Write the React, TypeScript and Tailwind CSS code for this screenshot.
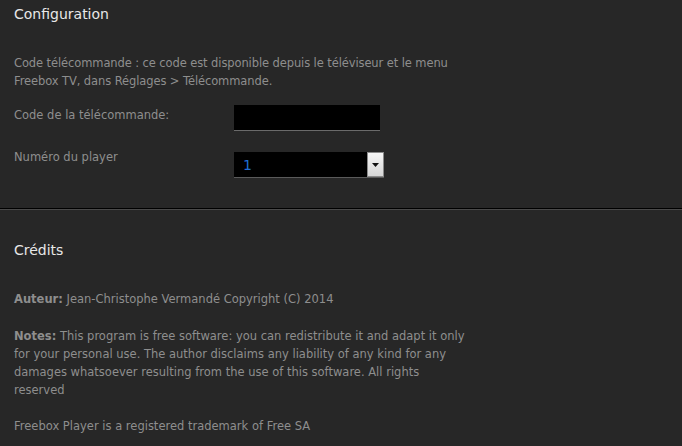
import React from "react";

function Heading({ children }: { children: React.ReactNode }) {
  return <h2 className="text-[14px] leading-5 text-[#e8e8e8] font-normal">{children}</h2>;
}

export default function App() {
  return (
    <div className="min-h-[446px] w-full bg-[#272727] text-[11.5px] leading-[18px] text-[#8e8e8e] font-['DejaVu_Sans',Verdana,sans-serif]">
      <section className="px-[14px] pt-[4px] pb-[30px]">
        <Heading>Configuration</Heading>
        <p className="mt-[30px] whitespace-nowrap tracking-[-0.1px]">
          Code télécommande : ce code est disponible depuis le téléviseur et le menu
          <br />
          Freebox TV, dans Réglages &gt; Télécommande.
        </p>
        <div className="mt-[15px] flex items-start">
          <label className="w-[220px] mt-[1px]">Code de la télécommande:</label>
          <input
            type="text"
            className="h-[26px] w-[146px] bg-black border-b border-[#6a6a6a] outline-none text-white px-2"
          />
        </div>
        <div className="mt-[21px] flex items-start">
          <label className="w-[220px] -mt-[4px]">Numéro du player</label>
          <div className="relative h-[26px] w-[150px] bg-black border-b border-[#5a5a5a] flex items-center">
            <span className="pl-[9px] text-[14px] text-[#1f6fd6]">1</span>
            <div className="absolute right-0 top-0 h-[25px] w-[17px] border border-[#8a8a8a] bg-gradient-to-b from-[#f6f6f6] to-[#d6d6d6] flex items-center justify-center">
              <svg width="7" height="4" viewBox="0 0 7 4">
                <path d="M0 0h7L3.5 4z" fill="#111" />
              </svg>
            </div>
          </div>
        </div>
      </section>
      <div className="border-t border-black border-b border-b-[#4a4a4a]" />
      <section className="px-[14px] pt-[30px] pb-[12px]">
        <Heading>Crédits</Heading>
        <p className="mt-[30px]">
          <b className="font-bold">Auteur:</b> Jean-Christophe Vermandé Copyright (C) 2014
        </p>
        <p className="mt-[19px] whitespace-nowrap">
          <b className="font-bold">Notes:</b> This program is free software: you can redistribute it and adapt it only
          <br />
          for your personal use. The author disclaims any liability of any kind for any
          <br />
          damages whatsoever resulting from the use of this software. All rights
          <br />
          reserved
        </p>
        <p className="mt-[18px]">Freebox Player is a registered trademark of Free SA</p>
      </section>
    </div>
  );
}
